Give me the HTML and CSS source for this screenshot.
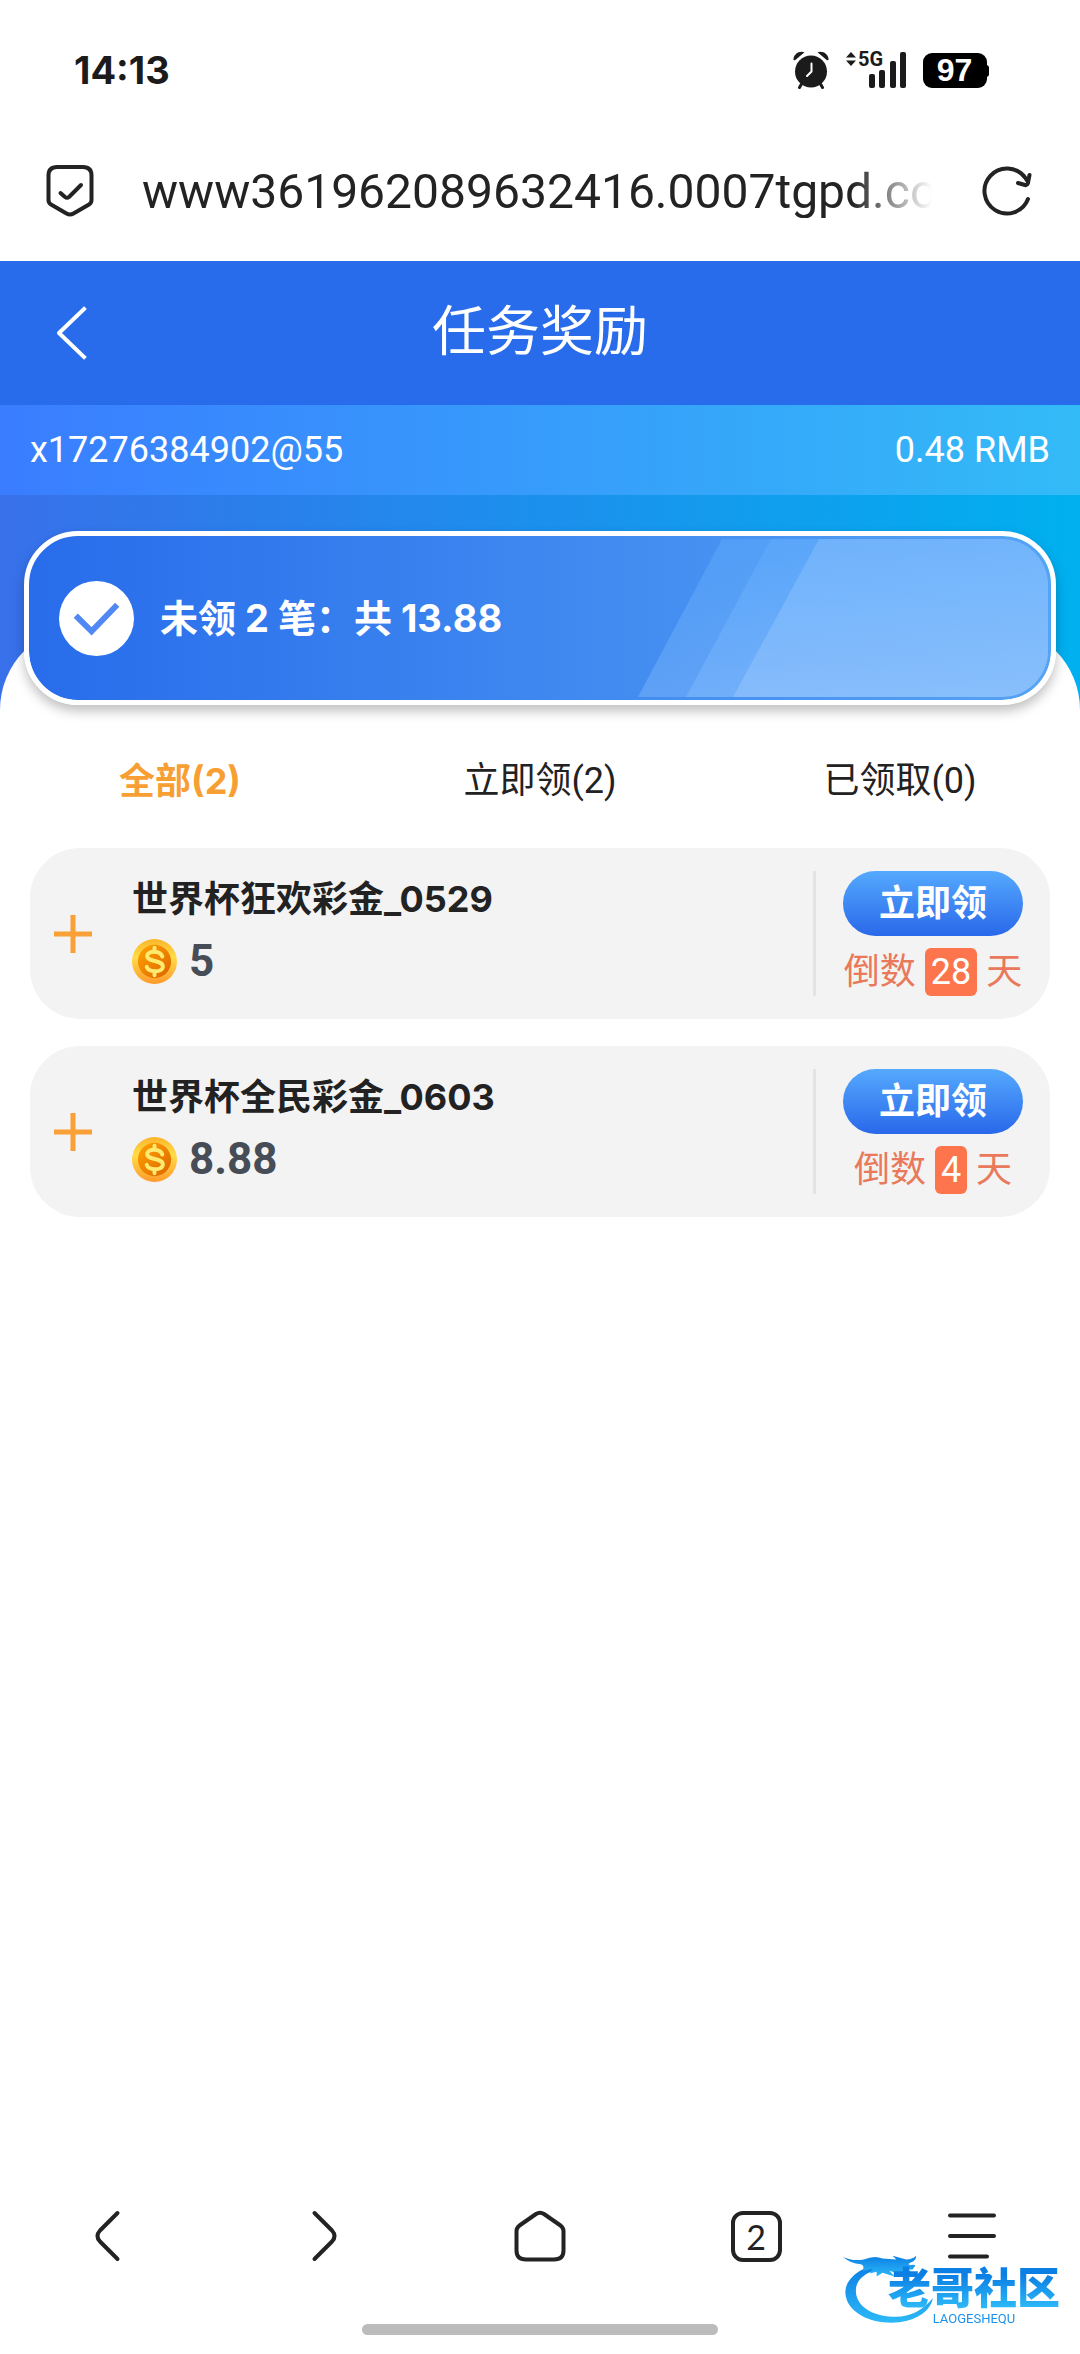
FILE: index.html
```html
<!DOCTYPE html>
<html lang="zh-CN">
<head>
    <meta charset="UTF-8">
    <meta name="viewport" content="width=device-width, initial-scale=1.0">
    <title>任务奖励</title>
    <link rel="stylesheet" href="styles.css">
</head>
<body>
    <!-- Status bar -->
    <div class="status-bar">
        <span class="time">14:13</span>
        <div class="status-icons">
            <svg class="icon-alarm" width="36" height="38" viewBox="0 0 36 38">
                <g fill="#1b1b1b">
                    <circle cx="18" cy="20.500" r="16"/>
                    <path d="M0.500 9C0 3.500 6 -1 11.500 1.200L2 9.300Z"/>
                    <path d="M35.500 9C36 3.500 30 -1 24.500 1.200L34 9.300Z"/>
                </g>
                <path d="M8.500 33L6.500 36.500M27.500 33L29.500 36.500" stroke="#1b1b1b" stroke-width="3" stroke-linecap="round"/>
                <path d="M18.500 12.500V20.500L14 25" fill="none" stroke="#fff" stroke-width="2" stroke-linecap="round"/>
            </svg>
            <svg class="icon-signal" width="62" height="54" viewBox="0 -8 62 54">
                <g fill="#1b1b1b">
                    <path d="M6 1L11 6.500H1ZM6 15L11 9.500H1Z"/>
                    <text x="13" y="15" class="net-label">5G</text>
                    <rect x="24" y="23" width="6" height="14" rx="2"/>
                    <rect x="34" y="19" width="6" height="18" rx="2"/>
                    <rect x="45" y="10" width="6" height="27" rx="2"/>
                    <rect x="55" y="1" width="6" height="36" rx="2"/>
                </g>
            </svg>
            <span class="battery">97</span>
        </div>
    </div>

    <!-- Address bar -->
    <div class="address-bar">
        <svg width="48" height="54" viewBox="0 0 48 54" fill="none" stroke="#232323" stroke-width="4" stroke-linecap="round" stroke-linejoin="round">
            <path d="M11 3H37Q45.500 3 45.500 11.500V36Q45.500 39 43 40.500L27.500 49.500Q24 51.500 20.500 49.500L5 40.500Q2.500 39 2.500 36V11.500Q2.500 3 11 3Z"/>
            <path d="M14.500 29L19 33Q21 34.500 23 33L35 21"/>
        </svg>
        <input class="url" type="text" aria-label="网址" value="www361962089632416.0007tgpd.com">
        <button class="icon-btn" aria-label="刷新">
            <svg width="50" height="50" viewBox="0 0 50 50" fill="none" stroke="#232323" stroke-width="4" stroke-linecap="round" stroke-linejoin="round">
                <path d="M46 33A22.500 22.500 0 1 1 43 11.500L46 16"/>
                <path d="M36 17L43 19Q45 19.500 45.800 17.500L47.500 9"/>
            </svg>
        </button>
    </div>

    <header>
        <button class="icon-btn back" aria-label="返回">
            <svg width="32" height="56" viewBox="0 0 32 56" fill="none" stroke="#fff" stroke-width="4" stroke-linecap="square" stroke-linejoin="round">
                <path d="M28 4L3 28L28 52"/>
            </svg>
        </button>
        <h1>任务奖励</h1>
    </header>

    <main>
        <div class="account">
            <span>x17276384902@55</span>
            <span>0.48 RMB</span>
        </div>

        <div class="hero">
            <div class="summary">
                <svg class="summary-stripes" viewBox="0 0 410 158" preserveAspectRatio="none">
                    <defs>
                        <linearGradient id="shine" x1="0" y1="0" x2="0" y2="1">
                            <stop offset="0" stop-color="#66b2ff"/>
                            <stop offset="1" stop-color="#8fc4ff"/>
                        </linearGradient>
                    </defs>
                    <path d="M84 0H410V158H0Z" fill="url(#shine)" opacity="0.350"/>
                    <path d="M133 0H410V158H48Z" fill="url(#shine)" opacity="0.350"/>
                    <path d="M181 0H410V158H95Z" fill="url(#shine)" opacity="0.350"/>
                    <path d="M181 0H410V158H95Z" fill="#a5cdfd" opacity="0.250"/>
                </svg>
                <svg class="summary-check" width="75" height="75" viewBox="0 0 76 76">
                    <circle cx="38" cy="38" r="38" fill="#fff"/>
                    <path d="M17 35L33 51L59 24" fill="none" stroke="#5189f4" stroke-width="6"/>
                </svg>
                <p>未领 2 笔：共 13.88</p>
            </div>
        </div>

        <div class="sheet">
            <div class="tabs">
                <button class="tab active">全部(2)</button>
                <button class="tab">立即领(2)</button>
                <button class="tab">已领取(0)</button>
            </div>

            <ul class="task-list">
                <li class="task">
                    <button class="icon-btn expand" aria-label="展开">
                        <svg width="38" height="38" viewBox="0 0 38 38" stroke="#f9a036" stroke-width="5">
                            <path d="M19 0V38M0 19H38"/>
                        </svg>
                    </button>
                    <div class="task-info">
                        <h2>世界杯狂欢彩金_0529</h2>
                        <div class="amount">
                            <svg width="45" height="45" viewBox="0 0 46 46">
                                <defs>
                                    <linearGradient id="coin-rim" x1="0" y1="0" x2="0" y2="1">
                                        <stop offset="0" stop-color="#fbb52b"/>
                                        <stop offset="0.400" stop-color="#ffdc48"/>
                                        <stop offset="1" stop-color="#ff9a2c"/>
                                    </linearGradient>
                                    <linearGradient id="coin-face" x1="0" y1="0" x2="1" y2="1">
                                        <stop offset="0" stop-color="#ffa400"/>
                                        <stop offset="1" stop-color="#dc6400"/>
                                    </linearGradient>
                                </defs>
                                <circle cx="23" cy="23" r="23" fill="url(#coin-rim)"/>
                                <circle cx="23" cy="23" r="17" fill="url(#coin-face)"/>
                                <path d="M31 18C29 11.500 15.500 11.500 15.500 17.500C15.500 24 31.500 21 31.500 28C31.500 34.500 17 34.500 15 28.500M23 9V13M23 33V37" fill="none" stroke="#ffea70" stroke-width="4" stroke-linecap="round"/>
                            </svg>
                            <span>5</span>
                        </div>
                    </div>
                    <div class="task-side">
                        <button class="claim">立即领</button>
                        <p class="countdown">倒数 <span class="days">28</span> 天</p>
                    </div>
                </li>
                <li class="task">
                    <button class="icon-btn expand" aria-label="展开">
                        <svg width="38" height="38" viewBox="0 0 38 38" stroke="#f9a036" stroke-width="5">
                            <path d="M19 0V38M0 19H38"/>
                        </svg>
                    </button>
                    <div class="task-info">
                        <h2>世界杯全民彩金_0603</h2>
                        <div class="amount">
                            <svg width="45" height="45" viewBox="0 0 46 46">
                                <circle cx="23" cy="23" r="23" fill="url(#coin-rim)"/>
                                <circle cx="23" cy="23" r="17" fill="url(#coin-face)"/>
                                <path d="M31 18C29 11.500 15.500 11.500 15.500 17.500C15.500 24 31.500 21 31.500 28C31.500 34.500 17 34.500 15 28.500M23 9V13M23 33V37" fill="none" stroke="#ffea70" stroke-width="4" stroke-linecap="round"/>
                            </svg>
                            <span>8.88</span>
                        </div>
                    </div>
                    <div class="task-side">
                        <button class="claim">立即领</button>
                        <p class="countdown">倒数 <span class="days">4</span> 天</p>
                    </div>
                </li>
            </ul>
        </div>
    </main>

    <!-- Browser toolbar -->
    <nav class="toolbar">
        <button class="icon-btn" aria-label="后退">
            <svg width="56" height="56" viewBox="0 0 56 56" class="line-icon">
                <path d="M37.500 5L20 22.500Q15 28 20 33.500L37.500 51"/>
            </svg>
        </button>
        <button class="icon-btn" aria-label="前进">
            <svg width="56" height="56" viewBox="0 0 56 56" class="line-icon">
                <path d="M18.500 5L36 22.500Q41 28 36 33.500L18.500 51"/>
            </svg>
        </button>
        <button class="icon-btn" aria-label="主页">
            <svg width="56" height="56" viewBox="0 0 56 56" class="line-icon">
                <path d="M24 6Q28 3.500 32 6L48.500 17.500Q51.500 20 51.500 23V42.500Q51.500 51.500 42 51.500H14Q4.500 51.500 4.500 42.500V23Q4.500 20 7.500 17.500Z"/>
            </svg>
        </button>
        <button class="icon-btn" aria-label="标签页">
            <span class="tab-count">2</span>
        </button>
        <button class="icon-btn" aria-label="菜单">
            <svg width="56" height="56" viewBox="0 0 56 56" class="line-icon">
                <path d="M6 7.500H50M6 28H50M6 48.500H43"/>
            </svg>
        </button>
    </nav>
    <div class="home-indicator"></div>

    <!-- Community watermark -->
    <div class="watermark">
        <svg class="dragon" width="93" height="73" viewBox="0 0 94 78" preserveAspectRatio="none">
            <defs>
                <linearGradient id="dragon-fill" x1="0" y1="0" x2="0" y2="1">
                    <stop offset="0" stop-color="#0c7fe4"/>
                    <stop offset="1" stop-color="#2cb9f8"/>
                </linearGradient>
            </defs>
            <g fill="url(#dragon-fill)">
                <path d="M29 14C10 20 0 33 3 47C7 66 32 77 57 74C76 71 88 62 91 48C80 62 67 69 50 68C28 67 13 56 13 40C13 30 20 23 31 19Z"/>
                <path d="M0 4Q9 9 21 7Q32 2 40 6L54 7L50 3L64 7Q70 7 74 3Q74 8 69 10Q64 12 68 13Q73 12 73 14L70 18L60 16Q66 19 69 19L62 24L47 19L52 25L40 21L34 25V20L27 22L30 17L20 19Q22 13 18 12Q7 11 0 4Z"/>
            </g>
        </svg>
        <div class="watermark-text">
            <strong>老哥社区</strong>
            <small>LAOGESHEQU</small>
        </div>
    </div>
</body>
</html>
```
FILE: styles.css
```css
/* General Styles */
* {
    box-sizing: border-box;
}

body {
    margin: 0;
    min-height: 100vh;
    display: flex;
    flex-direction: column;
    font-family: Roboto, "Noto Sans CJK SC", sans-serif;
    font-size: 36px;
    line-height: 48px;
    background: #fff;
    color: #222;
}

h1, h2, p, ul {
    margin: 0;
    padding: 0;
}

svg {
    display: block;
    flex-shrink: 0;
}

button {
    padding: 0;
    border: none;
    background: none;
    font: inherit;
    color: inherit;
    cursor: pointer;
}

/* Bold labels use wider digits */
.time, .summary, .tab.active, .task-info h2 {
    font-family: Inter, "Noto Sans CJK SC", sans-serif;
    font-weight: bold;
}

/* Status Bar */
.status-bar {
    display: flex;
    justify-content: space-between;
    align-items: center;
    padding: 43px 93px 37px 74px;
}

.time {
    font-size: 38px;
    color: #1b1b1b;
}

.status-icons {
    display: flex;
    align-items: center;
    gap: 16px;
}

.net-label {
    font-size: 20px;
    font-weight: bold;
}

.battery {
    width: 64px;
    height: 35px;
    border-radius: 9px;
    background: #000;
    color: #fff;
    font: bold 32px/35px "Liberation Sans", sans-serif;
    text-align: center;
}

.battery::after {
    content: "";
    float: right;
    width: 3px;
    height: 12px;
    margin: 12px -2px 0 0;
    border-radius: 0 3px 3px 0;
    background: #000;
}

/* Address Bar */
.address-bar {
    display: flex;
    align-items: center;
    padding: 30px 48px 43px 46px;
}

.url {
    flex: 1;
    min-width: 0;
    height: 54px;
    margin: 0 50px 0 48px;
    padding: 0;
    border: none;
    outline: none;
    background: none;
    color: #232323;
    font-family: inherit;
    font-size: 48px;
    -webkit-mask-image: linear-gradient(to left, transparent, #000 80px);
    mask-image: linear-gradient(to left, transparent, #000 80px);
}

/* Header Styles */
header {
    display: grid;
    grid-template-columns: 120px 1fr 120px;
    align-items: center;
    height: 144px;
    background: #286ceb;
    color: #fff;
}

header h1 {
    font-size: 54px;
    font-weight: normal;
    line-height: 72px;
    text-align: center;
}

.icon-btn {
    display: flex;
    justify-content: center;
}

.back {
    justify-content: flex-start;
    padding-left: 56px;
}

/* Account Row */
.account {
    display: flex;
    justify-content: space-between;
    align-items: center;
    height: 90px;
    padding: 0 30px;
    background: linear-gradient(to right, #3a7dff, #33bbf7);
    color: #fff;
}

/* Summary Card */
main {
    flex: 1;
}

.hero {
    padding: 36px 24px 5px;
    background: linear-gradient(to right, #3870ea, #00b0ef);
}

.summary {
    position: relative;
    z-index: 1;
    display: flex;
    align-items: center;
    gap: 26px;
    height: 174px;
    padding: 0 30px;
    border: 5px solid #fff;
    border-radius: 54px;
    background: linear-gradient(to right, #286ceb, #55a3f5) padding-box;
    box-shadow: 0 6px 12px rgba(0, 0, 0, 0.25);
    color: #fff;
    font-size: 38px;
}

.summary-stripes {
    position: absolute;
    top: 3px;
    right: 3px;
    width: 410px;
    height: 158px;
    border-radius: 0 46px 46px 0;
}

/* White sheet slides up behind the card */
.sheet {
    margin-top: -84px;
    padding-top: 128px;
    border-radius: 84px 84px 0 0;
    background: #fff;
}

.tabs {
    display: grid;
    grid-template-columns: repeat(3, 1fr);
}

.tab {
    height: 54px;
}

.tab.active {
    color: #f89f34;
}

/* Task List */
.task-list {
    display: flex;
    flex-direction: column;
    gap: 27px;
    padding: 40px 30px;
    list-style: none;
}

.task {
    display: flex;
    align-items: center;
    padding: 23px 0;
    border-radius: 50px;
    background: #f3f3f3;
}

.expand {
    margin: 0 40px 0 24px;
}

.task-info {
    flex: 1;
}

.task-info h2 {
    font-size: 36px;
    line-height: 48px;
}

.amount {
    display: flex;
    align-items: center;
    gap: 12px;
    margin: 14px 0 7px;
    color: #474d57;
    font-size: 44px;
    font-weight: bold;
}

.task-side {
    display: flex;
    flex-direction: column;
    align-items: center;
    gap: 12px;
    width: 237px;
    border-left: 3px solid #e3e3e3;
}

.claim {
    width: 180px;
    height: 65px;
    border-radius: 33px;
    background: linear-gradient(#55a9fe, #2968ea);
    color: #fff;
    font-weight: bold;
}

.countdown {
    color: #e9795a;
    line-height: 48px;
    white-space: nowrap;
}

.days {
    display: inline-block;
    padding: 0 6px;
    border-radius: 6px;
    background: #fd754d;
    color: #fff;
}

/* Browser Toolbar */
.toolbar {
    display: grid;
    grid-template-columns: repeat(5, 1fr);
    align-items: center;
    padding-bottom: 60px;
}

.line-icon {
    fill: none;
    stroke: #232323;
    stroke-width: 4;
    stroke-linecap: round;
    stroke-linejoin: round;
}

.tab-count {
    width: 51px;
    height: 51px;
    border: 4px solid #232323;
    border-radius: 12px;
    font-family: Lato, sans-serif;
    font-size: 34px;
    line-height: 43px;
}

.home-indicator {
    width: 33%;
    height: 11px;
    margin: 0 auto 19px;
    border-radius: 6px;
    background: #bcbcbc;
}

/* Watermark */
.watermark {
    position: fixed;
    right: 20px;
    bottom: 28px;
    display: flex;
    align-items: flex-end;
}

.watermark-text {
    display: flex;
    flex-direction: column;
    align-items: center;
    margin-left: -48px;
    color: #1b93ec;
}

.watermark-text strong {
    background: linear-gradient(#0c7fe4 20%, #2cb9f8 90%);
    -webkit-background-clip: text;
    background-clip: text;
    color: transparent;
    font-size: 43px;
    font-weight: 900;
    line-height: 46px;
}

.watermark-text small {
    font-size: 13px;
    line-height: 14px;
}
```
